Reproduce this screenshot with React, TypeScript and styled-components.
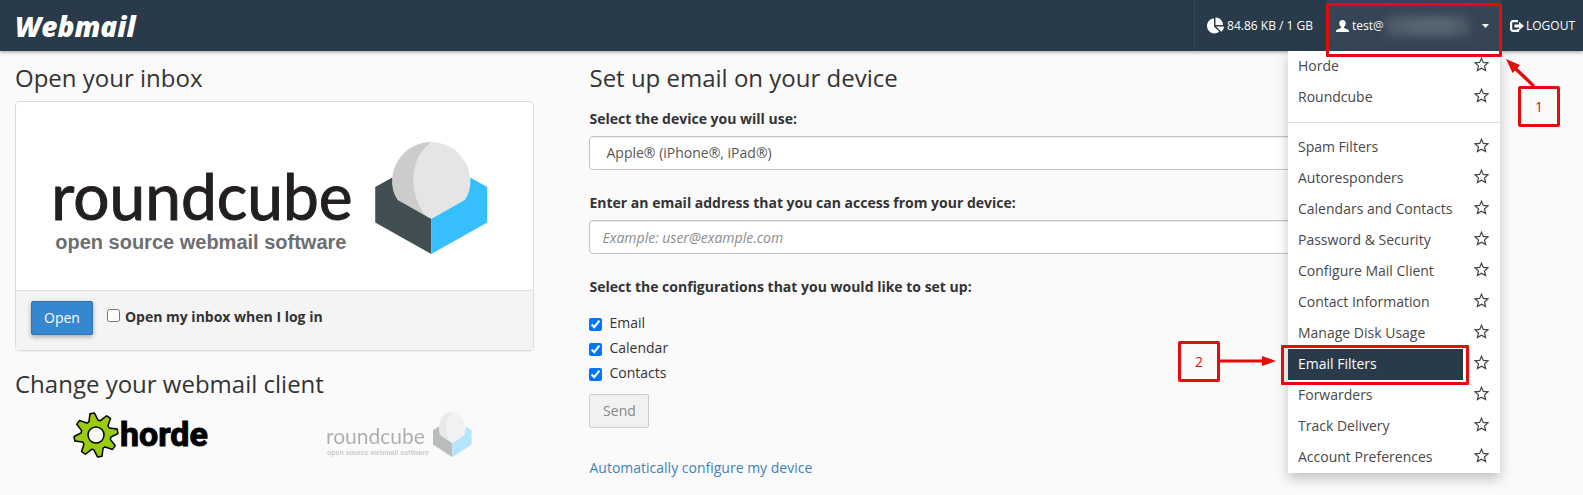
import React from "react";
import styled, { createGlobalStyle } from "styled-components";
import { FaChartPie } from "react-icons/fa";

const GlobalStyle = createGlobalStyle`
  * { box-sizing: border-box; }
  body {
    margin: 0;
    background: #fafafa;
    color: #333;
    font: 14px/20px "Open Sans", sans-serif;
    overflow-x: hidden;
  }
`;

const RED = "#e60c0c";
const NAVY = "#293a4a";

const Header = styled.header`
  position: relative;
  z-index: 2;
  display: flex;
  align-items: center;
  justify-content: space-between;
  height: 51px;
  padding-left: 12px;
  background: ${NAVY};
  box-shadow: 0 1px 4px rgba(0, 0, 0, 0.4);
`;

const Brand = styled.a`
  display: flex;
  color: #fff;
  text-decoration: none;
`;

const Nav = styled.nav`
  display: flex;
  align-self: stretch;
  color: #fff;
  font-size: 12px;
`;

const Quota = styled.div`
  display: flex;
  align-items: center;
  gap: 3px;
  padding: 0 14px 0 12px;
  border-left: 1px solid #33475a;
`;

const Account = styled.div`
  position: relative;
  width: 174px;
  background: #364555;
`;

const AccountButton = styled.button`
  display: flex;
  align-items: center;
  width: 100%;
  height: 100%;
  padding: 0 12px 0 9px;
  border: 0;
  background: none;
  color: #fff;
  font: inherit;
`;

const AccountName = styled.span`
  margin-left: 3px;
`;

const Redacted = styled.span`
  flex: 1;
  height: 20px;
  margin: 0 12px 0 1px;
  border-radius: 6px;
  background: linear-gradient(90deg, #4a5866, #566472 40%, #596674 70%, #465462);
  filter: blur(4px);
`;

const Logout = styled.a`
  display: flex;
  align-items: center;
  gap: 2px;
  padding: 0 8px 0 9px;
  color: #fff;
  text-decoration: none;
`;

const Menu = styled.ul`
  position: absolute;
  top: 100%;
  right: 1px;
  width: 212px;
  margin: 0;
  padding: 0;
  list-style: none;
  background: #fff;
  box-shadow: 0 6px 12px rgba(0, 0, 0, 0.22);
  font-size: 14px;
`;

const MenuRow = styled.li`
  position: relative;
  display: flex;
  align-items: center;
  height: 31px;
`;

const MenuLink = styled.a<{ $active?: boolean }>`
  width: 175px;
  padding: 0 10px 2px;
  line-height: 29px;
  text-decoration: none;
  white-space: nowrap;
  color: ${(p) => (p.$active ? "#fff" : "#484848")};
  background: ${(p) => (p.$active ? NAVY : "transparent")};
`;

const StarButton = styled.button`
  display: flex;
  margin: 0 0 5px 11px;
  padding: 0;
  border: 0;
  background: none;
`;

const Divider = styled.li`
  height: 1px;
  margin: 9px 0;
  background: #e0e0e0;
`;

const Outline = styled.div<{ $inset: string }>`
  position: absolute;
  inset: ${(p) => p.$inset};
  border: 3px solid ${RED};
  border-radius: 1px;
  pointer-events: none;
`;

const Step = styled.div`
  position: absolute;
  display: flex;
  align-items: center;
  justify-content: center;
  width: 42px;
  height: 41px;
  border: 3px solid ${RED};
  border-radius: 2px;
  color: ${RED};
  font-size: 14px;
`;

const StepOne = styled(Step)`
  top: 86px;
  left: 191px;
`;

const StepTwo = styled(Step)`
  top: -8px;
  right: 280px;
`;

const ArrowOne = styled.svg`
  position: absolute;
  top: 58px;
  left: 178px;
`;

const ArrowTwo = styled.svg`
  position: absolute;
  top: 6px;
  right: 224px;
`;

const Main = styled.main`
  display: grid;
  grid-template-columns: 36fr 53fr 11fr;
  column-gap: 55px;
  padding: 14px 15px;
`;

const Heading = styled.h2`
  margin: 0 0 10px;
  font-size: 24px;
  font-weight: 400;
  line-height: 26px;
`;

const Card = styled.section`
  margin-bottom: 20px;
  border: 1px solid #ddd;
  border-radius: 4px;
  background: #fff;
  box-shadow: 0 1px 1px rgba(0, 0, 0, 0.05);
`;

const CardArt = styled.svg`
  display: block;
  width: 100%;
  height: 188px;
`;

const CardFooter = styled.div`
  display: flex;
  align-items: flex-start;
  height: 60px;
  padding: 10px 15px;
  border-top: 1px solid #ddd;
  background: #f4f4f4;
`;

const Button = styled.button<{ $primary?: boolean }>`
  height: 34px;
  min-width: 60px;
  padding: 0 12px;
  border: 1px solid ${(p) => (p.$primary ? "#2a75b3" : "#ccc")};
  border-radius: 2px;
  font: inherit;
  color: ${(p) => (p.$primary ? "#fff" : "#888")};
  background: ${(p) => (p.$primary ? "#3787d0" : "#f1f1f1")};
  box-shadow: ${(p) => (p.$primary ? "0 2px 5px rgba(0, 0, 0, 0.3)" : "none")};
`;

const AutoOpen = styled.label`
  display: flex;
  gap: 5px;
  margin: 6px 0 0 14px;
  font-weight: 700;
`;

const Tick = styled.input<{ $top: number }>`
  width: 13px;
  height: 13px;
  margin: ${(p) => p.$top}px 0 0;
`;

const Clients = styled.div`
  display: grid;
  grid-template-columns: 1fr 1fr;
  justify-items: center;
  padding: 5px 7px 0 0;
`;

const ClientLink = styled.a<{ $faded?: boolean }>`
  display: flex;
  opacity: ${(p) => (p.$faded ? 0.35 : 1)};
  color: #000;
`;

const SetupForm = styled.form`
  padding-top: 8px;
`;

const FieldLabel = styled.label`
  display: block;
  font-weight: 700;
`;

const Control = styled.select`
  display: block;
  width: 100%;
  height: 34px;
  margin: 7px 0 23px;
  padding: 0 16px;
  appearance: none;
  border: 1px solid #c4c4c4;
  border-radius: 4px;
  background: #fff;
  box-shadow: inset 0 1px 1px rgba(0, 0, 0, 0.08);
  color: #555;
  font: inherit;
`;

const TextControl = styled(Control)`
  padding: 0 12px;
  &::placeholder {
    color: #8c8c8c;
    font-style: italic;
  }
`;

const Choices = styled.fieldset`
  margin: 0 0 11px;
  padding: 0;
  border: 0;
`;

const Legend = styled.legend`
  padding: 0 0 16px;
  font-weight: 700;
`;

const Choice = styled.label`
  display: flex;
  gap: 7px;
  & + & {
    margin-top: 5px;
  }
`;

const AutoLink = styled.a`
  display: inline-block;
  margin-top: 30px;
  color: #4481b8;
  text-decoration: none;
`;

const RoundcubeIcon = () => (
  <g>
    <circle cx="56" cy="39" r="39" fill="#e5e5e5" />
    <path d="M56 0A39 39 0 0 0 17 39q0 10 5.500 19L51 75Q38 58 38 38 38 14 56 0z" fill="#ccc" />
    <path d="M0 45L17 35.500Q16 49 22.500 58L56 77V112L0 80.500z" fill="#414e52" />
    <path d="M112 45L95 35.500Q96 49 89.500 58L56 77V112L112 80.500z" fill="#37beff" />
  </g>
);

const RoundcubeCard = () => (
  <CardArt viewBox="0 0 517 188" role="img" aria-label="Roundcube">
    <text x="35" y="118" fontFamily="Lato, sans-serif" fontSize="64" fill="#231f20" stroke="#231f20" strokeWidth="1">
      roundcube
    </text>
    <text x="39" y="147" fontFamily="Liberation Sans, sans-serif" fontWeight="700" fontSize="20" fill="#6d6e70">
      open source webmail software
    </text>
    <g transform="translate(359 40)">
      <RoundcubeIcon />
    </g>
  </CardArt>
);

const RoundcubeSmall = () => (
  <svg width="146" height="46" viewBox="0 0 146 46" role="img" aria-label="Roundcube">
    <text x="0" y="32" fontFamily="Lato, sans-serif" fontSize="21" fill="#231f20">
      roundcube
    </text>
    <text x="1" y="43" fontFamily="Liberation Sans, sans-serif" fontWeight="700" fontSize="7" fill="#6d6e70">
      open source webmail software
    </text>
    <g transform="translate(107 0) scale(.345 .405)">
      <RoundcubeIcon />
    </g>
  </svg>
);

const gearPath = () => {
  const points: string[] = [];
  for (let tooth = 0; tooth < 8; tooth++) {
    const middle = tooth * 45 - 100;
    const corners = [[-18, 15], [-6, 22], [6, 22], [18, 15]];
    for (const [offset, radius] of corners) {
      const angle = ((middle + offset) * Math.PI) / 180;
      points.push(`${(23 + radius * Math.cos(angle)).toFixed(2)} ${(23 + radius * Math.sin(angle)).toFixed(2)}`);
    }
  }
  return `M${points.join("L")}Z`;
};

const HordeLogo = () => (
  <svg width="140" height="46" viewBox="0 0 140 46" role="img" aria-label="Horde">
    <path d={gearPath()} fill="#9c1" stroke="#000" strokeWidth="1.500" strokeLinejoin="round" />
    <circle cx="23" cy="23" r="8" fill="#fafafa" stroke="#000" strokeWidth="1.500" />
    <text
      x="47"
      y="34"
      fontFamily="Roboto, sans-serif"
      fontWeight="700"
      fontSize="34"
      stroke="#000"
      strokeWidth="1"
    >
      horde
    </text>
  </svg>
);

const WebmailLogo = () => (
  <svg width="134" height="32" viewBox="0 0 134 32" role="img" aria-label="Webmail">
    <text
      x="3"
      y="27"
      fontFamily="Open Sans, sans-serif"
      fontWeight="800"
      fontStyle="italic"
      fontSize="28"
      fill="#fff"
    >
      Webmail
    </text>
  </svg>
);

const StarIcon = () => (
  <svg width="15" height="15" viewBox="0 0 15 15" aria-hidden="true">
    <path
      d="M7.500 1.200L9.300 5.400 14 5.800 10.500 8.900 11.600 13.600 7.500 11.200 3.400 13.600 4.500 8.900 1 5.800 5.700 5.400z"
      fill="none"
      stroke="#444"
      strokeWidth="1.200"
    />
  </svg>
);

const UserIcon = () => (
  <svg width="13" height="12" viewBox="0 0 12 12" preserveAspectRatio="none" fill="#fff" aria-hidden="true">
    <path d="M6 0C4 0 3 1.300 3 3.200 3 4.700 3.800 6.200 4.700 7V8C3.500 8.800 0 9.300 0 11V12H12V11C12 9.300 8.500 8.800 7.300 8V7C8.200 6.200 9 4.700 9 3.200 9 1.300 8 0 6 0z" />
  </svg>
);

const LogoutIcon = () => (
  <svg width="14" height="12" viewBox="0 0 14 12" fill="#fff" aria-hidden="true">
    <path d="M8 1.100H3A1.900 1.900 0 0 0 1.100 3V9A1.900 1.900 0 0 0 3 10.900H8V9" fill="none" stroke="#fff" strokeWidth="2.200" />
    <path d="M4.500 4.500H9V1.800L14 6 9 10.200V7.500H4.500z" />
  </svg>
);

const clientItems = ["Horde", "Roundcube"];
const settingItems = [
  "Spam Filters",
  "Autoresponders",
  "Calendars and Contacts",
  "Password & Security",
  "Configure Mail Client",
  "Contact Information",
  "Manage Disk Usage",
  "Email Filters",
  "Forwarders",
  "Track Delivery",
  "Account Preferences",
];

const MenuItem = ({ label }: { label: string }) => {
  const active = label === "Email Filters";
  return (
    <MenuRow>
      <MenuLink href="#" $active={active}>
        {label}
      </MenuLink>
      <StarButton type="button" aria-label={`Set ${label} as default`}>
        <StarIcon />
      </StarButton>
      {active && (
        <>
          <Outline $inset="-4px 31px -5px -7px" />
          <StepTwo>2</StepTwo>
          <ArrowTwo width="56" height="12" viewBox="0 0 56 12" fill={RED} aria-hidden="true">
            <path d="M0 4.500H42V1L56 6 42 11V7.500H0z" />
          </ArrowTwo>
        </>
      )}
    </MenuRow>
  );
};

export default function App() {
  return (
    <>
      <GlobalStyle />
      <Header>
        <Brand href="#">
          <WebmailLogo />
        </Brand>
        <Nav>
          <Quota>
            <FaChartPie size={17} />
            84.86 KB / 1 GB
          </Quota>
          <Account>
            <AccountButton type="button" aria-haspopup="true" aria-expanded="true">
              <UserIcon />
              <AccountName>test@</AccountName>
              <Redacted />
              <svg width="7" height="4" viewBox="0 0 7 4" fill="#fff" aria-hidden="true">
                <path d="M0 0H7L3.500 4z" />
              </svg>
            </AccountButton>
            <Menu>
              {clientItems.map((label) => (
                <MenuItem key={label} label={label} />
              ))}
              <Divider />
              {settingItems.map((label) => (
                <MenuItem key={label} label={label} />
              ))}
            </Menu>
            <Outline $inset="3px -1px -6px -1px" />
            <StepOne>1</StepOne>
            <ArrowOne width="32" height="30" viewBox="0 0 32 30" fill={RED} aria-hidden="true">
              <path d="M1 1L15 7 12.500 10 30 27 28 29.500 10 12.500 7.500 15z" />
            </ArrowOne>
          </Account>
          <Logout href="#">
            <LogoutIcon />
            LOGOUT
          </Logout>
        </Nav>
      </Header>
      <Main>
        <div>
          <Heading>Open your inbox</Heading>
          <Card>
            <RoundcubeCard />
            <CardFooter>
              <Button type="button" $primary>
                Open
              </Button>
              <AutoOpen>
                <Tick type="checkbox" $top={2} />
                Open my inbox when I log in
              </AutoOpen>
            </CardFooter>
          </Card>
          <Heading>Change your webmail client</Heading>
          <Clients>
            <ClientLink href="#">
              <HordeLogo />
            </ClientLink>
            <ClientLink href="#" $faded>
              <RoundcubeSmall />
            </ClientLink>
          </Clients>
        </div>
        <div>
          <Heading>Set up email on your device</Heading>
          <SetupForm>
            <FieldLabel htmlFor="device">Select the device you will use:</FieldLabel>
            <Control id="device">
              <option>Apple® (iPhone®, iPad®)</option>
            </Control>
            <FieldLabel htmlFor="address">Enter an email address that you can access from your device:</FieldLabel>
            <TextControl as="input" id="address" placeholder="Example: user@example.com" />
            <Choices>
              <Legend>Select the configurations that you would like to set up:</Legend>
              {["Email", "Calendar", "Contacts"].map((name) => (
                <Choice key={name}>
                  <Tick type="checkbox" defaultChecked $top={5} />
                  {name}
                </Choice>
              ))}
            </Choices>
            <Button type="submit" disabled>
              Send
            </Button>
          </SetupForm>
          <AutoLink href="#">Automatically configure my device</AutoLink>
        </div>
      </Main>
    </>
  );
}
